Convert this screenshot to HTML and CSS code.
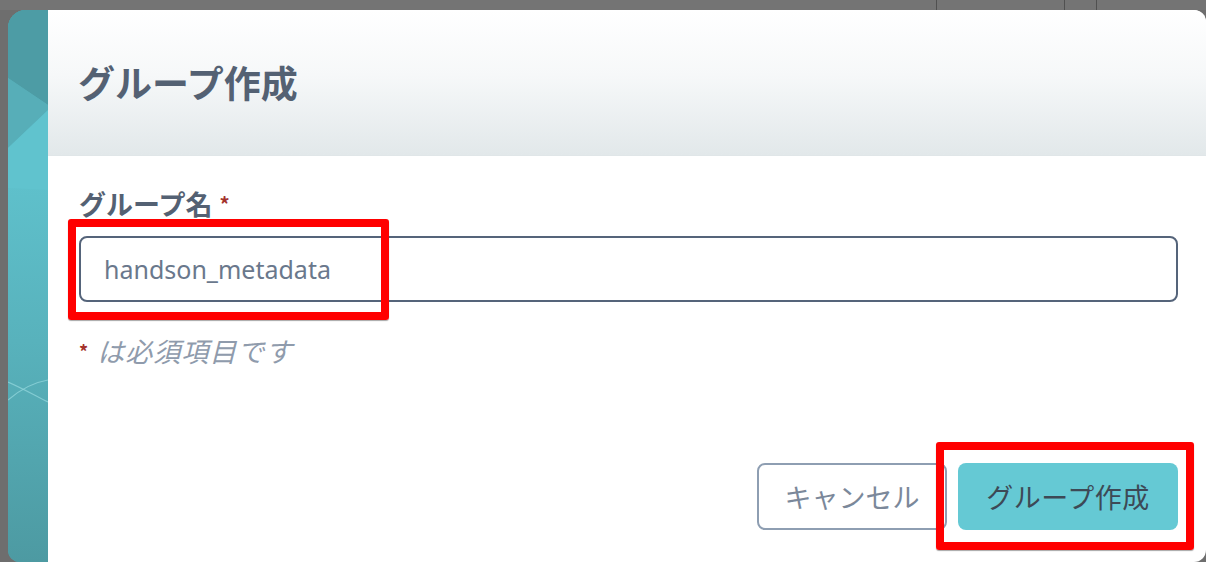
FILE: index.html
```html
<!DOCTYPE html>
<html lang="ja">
<head>
<meta charset="utf-8">
<title>グループ作成</title>
<link rel="stylesheet" href="styles.css">
</head>
<body>
<div class="topstrip">
  <span class="topline l1"></span>
  <span class="topline l2"></span>
  <span class="topline l3"></span>
</div>
<div class="stage">
  <div class="side">
    <svg class="side-art" width="40" height="552" viewBox="0 0 40 552" preserveAspectRatio="none">
      <defs>
        <linearGradient id="sg" x1="0" y1="0" x2="0" y2="1">
          <stop offset="0" stop-color="#4f9fa8"/>
          <stop offset="0.3" stop-color="#5fc1cc"/>
          <stop offset="0.6" stop-color="#58b2bc"/>
          <stop offset="1" stop-color="#4d9aa2"/>
        </linearGradient>
      </defs>
      <rect x="0" y="0" width="40" height="552" fill="url(#sg)"/>
      <polygon points="0,0 40,0 40,95 0,68" fill="#4d9ca5"/>
      <polygon points="0,68 40,95 40,100 0,138" fill="#57aeb8"/>
      <polygon points="0,138 40,100 40,180 0,178" fill="#60c3ce"/>
      <path d="M0,390 C14,378 28,372 40,370" stroke="#8fd3da" stroke-width="1.2" fill="none" opacity="0.8"/>
      <path d="M0,372 C14,378 28,386 40,392" stroke="#8fd3da" stroke-width="1.2" fill="none" opacity="0.8"/>
    </svg>
  </div>
  <div class="modal">
    <div class="modal-header">
      <h1 class="modal-title">グループ作成</h1>
    </div>
    <div class="modal-body">
      <label class="field-label">グループ名<span class="req">*</span></label>
      <div class="input">handson_metadata</div>
      <p class="hint"><span class="req">*</span> <em>は必須項目です</em></p>
      <div class="footer">
        <button class="btn btn-cancel">キャンセル</button>
        <button class="btn btn-primary">グループ作成</button>
      </div>
    </div>
  </div>
</div>
<div class="mark mark-input"></div>
<div class="mark mark-button"></div>
</body>
</html>
```

FILE: styles.css
```css
html, body {
  margin: 0;
  padding: 0;
}
body {
  width: 1206px;
  height: 562px;
  overflow: hidden;
  background: #6e6e6e;
  font-family: "Noto Sans", "Noto Sans CJK JP", sans-serif;
  position: relative;
}
.topstrip {
  height: 10px;
  background: #747474;
  position: relative;
}
.topline {
  position: absolute;
  top: 0;
  width: 1px;
  height: 10px;
  background: #505050;
}
.l1 { left: 936px; }
.l2 { left: 1064px; }
.l3 { left: 1096px; }
.stage {
  display: flex;
  height: 552px;
  padding-left: 8px;
}
.side {
  width: 40px;
  flex: none;
  border-radius: 18px 0 0 12px;
  overflow: hidden;
  background: #52a7b0;
}
.side-art {
  display: block;
}
.modal {
  flex: 1;
  background: #ffffff;
  border-radius: 0 12px 12px 0;
  display: flex;
  flex-direction: column;
  overflow: hidden;
}
.modal-header {
  height: 146px;
  background: linear-gradient(to bottom, #ffffff 0%, #f6f8f9 45%, #e2e8ea 100%);
  border-bottom: 1px solid #e0e6e8;
  display: flex;
  align-items: center;
  padding-left: 30px;
  box-sizing: border-box;
}
.modal-title {
  margin: 0;
  font-family: "Noto Sans CJK JP", sans-serif;
  font-size: 37px;
  font-weight: 700;
  color: #546173;
  line-height: 1;
}
.modal-body {
  padding: 32px 28px 0 31px;
  display: flex;
  flex-direction: column;
}
.field-label {
  font-family: "Noto Sans CJK JP", sans-serif;
  font-size: 27px;
  font-weight: 700;
  color: #546173;
  line-height: 32px;
}
.req {
  color: #a3322c;
  font-size: 20px;
  font-weight: 700;
  margin-left: 7px;
  vertical-align: top;
}
.input {
  margin-top: 16px;
  height: 66px;
  box-sizing: border-box;
  border: 2px solid #55647a;
  border-radius: 8px;
  padding: 0 23px;
  display: flex;
  align-items: center;
  font-size: 25px;
  color: #6a788c;
}
.hint {
  margin: 33px 0 0 0;
  line-height: 32px;
  font-size: 27px;
  color: #8f9bac;
  font-family: "Noto Sans CJK JP", sans-serif;
}
.hint .req {
  margin-left: 0;
  margin-right: 3px;
  font-size: 18px;
  font-style: normal;
}
.hint em {
  font-style: italic;
  letter-spacing: 1px;
}
.footer {
  margin-top: 96px;
  display: flex;
  justify-content: flex-end;
  gap: 11px;
}
.btn {
  height: 67px;
  border-radius: 8px;
  font-family: "Noto Sans CJK JP", sans-serif;
  font-size: 27px;
  padding: 0 20px;
  box-sizing: border-box;
  cursor: pointer;
}
.btn-cancel {
  width: 190px;
  background: #ffffff;
  border: 2px solid #8e9eb2;
  color: #7b889a;
}
.btn-primary {
  width: 220px;
  background: #65c9d4;
  border: none;
  color: #3d4956;
  letter-spacing: 0.5px;
}
.mark {
  position: absolute;
  border: 8px solid #ff0000;
  border-radius: 3px;
  box-shadow: 0 1px 1px rgba(0,0,0,0.35);
  box-sizing: border-box;
}
.mark-input {
  left: 68px;
  top: 219px;
  width: 321px;
  height: 101px;
}
.mark-button {
  left: 936px;
  top: 442px;
  width: 258px;
  height: 108px;
}
```
